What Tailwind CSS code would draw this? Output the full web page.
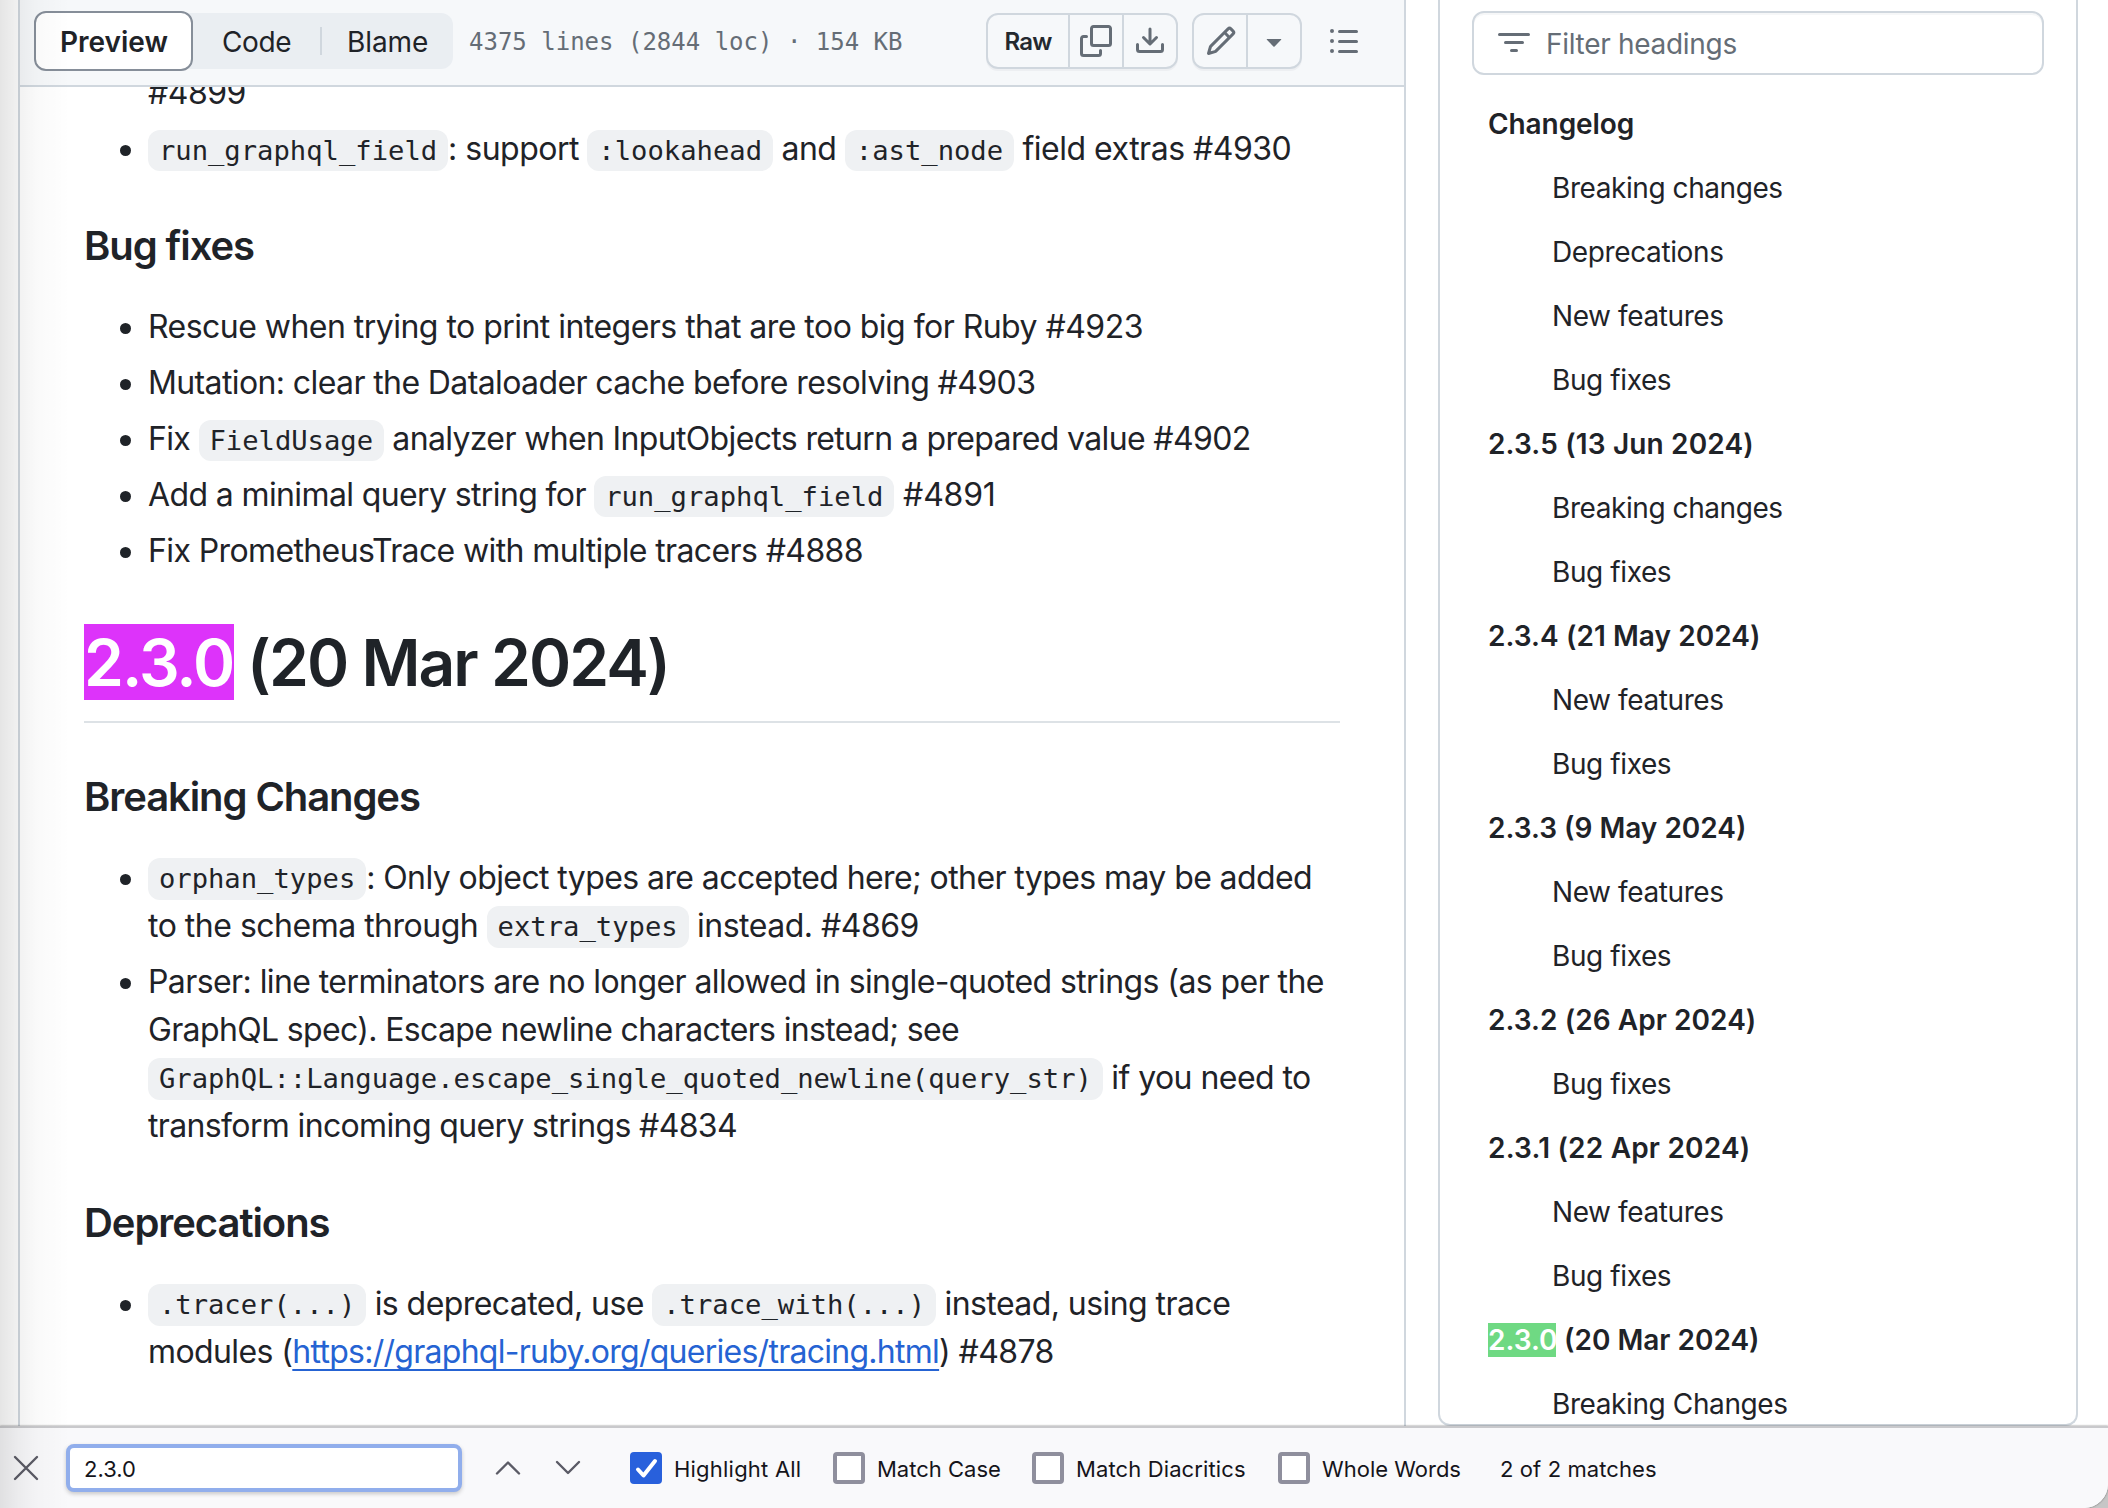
<!DOCTYPE html>
<html lang="en">
<head>
<meta charset="utf-8">
<title>Changelog</title>
<script src="https://cdn.jsdelivr.net/npm/@tailwindcss/browser@4"></script>
</head>
<body class="relative flex h-[1508px] w-[2108px] flex-col overflow-hidden bg-[#c6c6c6] font-[Inter,sans-serif] text-[#1f2328]">
  <div class="flex h-[1426px] bg-white pl-[18px]">
    <!-- File view -->
    <main class="flex w-[1388px] shrink-0 flex-col border-x-2 border-[#d0d7de]">
      <div class="flex h-[87px] shrink-0 items-start border-b-2 border-[#d0d7de] bg-[#f6f8fa] pl-3.5 pt-[11px]">
        <div class="flex h-[60px] w-[419px] items-center">
          <div class="z-10 flex h-[60px] w-[159px] items-center justify-center rounded-xl border-2 border-[#868e99] bg-white pt-0.5 pl-px text-[28px] leading-none font-semibold">Preview</div>
          <div class="-ml-3 flex h-14 w-[272px] items-center rounded-r-xl bg-[#eaeef2] text-[28px] leading-none">
            <span class="w-[139px] pt-0.5 pl-[41px] tracking-[-0.4px]">Code</span>
            <span class="h-7 w-0.5 bg-[#d0d7de]"></span>
            <span class="pt-0.5 pl-[25px] tracking-[-0.1px]">Blame</span>
          </div>
        </div>
        <div class="ml-4 flex h-[60px] w-[517px] items-center pt-0.5 font-['DejaVu_Sans_Mono',monospace] text-[24px] leading-none whitespace-pre text-[#656d76]">4375 lines (2844 loc) · 154 KB</div>
        <div class="mt-0.5 flex h-14 w-[192px] rounded-xl border-2 border-[#d0d7de] bg-[#f6f8fa] text-[#656d76] shadow-[0_2px_0_rgba(31,35,40,0.04)]">
          <span class="flex w-[82px] items-center justify-center border-r-2 border-[#d0d7de] pt-px text-[24px] leading-none font-semibold tracking-[-0.9px] text-[#24292f]">Raw</span>
          <span class="flex w-[54px] items-center justify-center border-r-2 border-[#d0d7de]">
            <svg class="size-8 shrink-0" viewBox="0 0 16 16" fill="currentColor"><path d="M0 6.75C0 5.784.784 5 1.75 5h1.5a.75.75 0 0 1 0 1.5h-1.5a.25.25 0 0 0-.25.25v7.5c0 .138.112.25.25.25h7.5a.25.25 0 0 0 .25-.25v-1.5a.75.75 0 0 1 1.5 0v1.5A1.75 1.75 0 0 1 9.25 16h-7.5A1.75 1.75 0 0 1 0 14.25Z"/><path d="M5 1.75C5 .784 5.784 0 6.75 0h7.5C15.216 0 16 .784 16 1.75v7.5A1.75 1.75 0 0 1 14.25 11h-7.5A1.75 1.75 0 0 1 5 9.25Zm1.75-.25a.25.25 0 0 0-.25.25v7.5c0 .138.112.25.25.25h7.5a.25.25 0 0 0 .25-.25v-7.5a.25.25 0 0 0-.25-.25Z"/></svg>
          </span>
          <span class="flex flex-1 items-center justify-center">
            <svg class="size-8 shrink-0" viewBox="0 0 16 16" fill="currentColor"><path d="M2.75 14A1.75 1.75 0 0 1 1 12.25v-2.5a.75.75 0 0 1 1.5 0v2.5c0 .138.112.25.25.25h10.5a.25.25 0 0 0 .25-.25v-2.5a.75.75 0 0 1 1.5 0v2.5A1.75 1.75 0 0 1 13.25 14Z"/><path d="M7.25 7.689V2a.75.75 0 0 1 1.5 0v5.689l1.97-1.969a.749.749 0 1 1 1.06 1.06l-3.25 3.25a.749.749 0 0 1-1.06 0L4.22 6.78a.749.749 0 1 1 1.06-1.06l1.97 1.969Z"/></svg>
          </span>
        </div>
        <div class="mt-0.5 ml-3.5 flex h-14 w-[110px] rounded-xl border-2 border-[#d0d7de] bg-[#f6f8fa] text-[#656d76] shadow-[0_2px_0_rgba(31,35,40,0.04)]">
          <span class="flex w-[54px] items-center justify-center border-r-2 border-[#d0d7de] pl-px">
            <svg class="size-8 shrink-0" viewBox="0 0 16 16" fill="currentColor"><path d="M11.013 1.427a1.75 1.75 0 0 1 2.474 0l1.086 1.086a1.75 1.75 0 0 1 0 2.474l-8.61 8.61c-.21.21-.47.364-.756.445l-3.251.93a.75.75 0 0 1-.927-.928l.929-3.25c.081-.286.235-.547.445-.758l8.61-8.61Zm.176 4.823L9.75 4.81l-6.286 6.287a.253.253 0 0 0-.064.108l-.558 1.953 1.953-.558a.253.253 0 0 0 .108-.064Zm1.238-3.763a.25.25 0 0 0-.354 0L10.811 3.75l1.439 1.44 1.263-1.263a.25.25 0 0 0 0-.354Z"/></svg>
          </span>
          <span class="flex flex-1 items-center justify-center">
            <svg class="size-8 shrink-0" viewBox="0 0 16 16" fill="currentColor"><path d="m4.427 7.427 3.396 3.396a.25.25 0 0 0 .354 0l3.396-3.396A.25.25 0 0 0 11.396 7H4.604a.25.25 0 0 0-.177.427Z"/></svg>
          </span>
        </div>
        <div class="ml-[26px] flex h-[60px] items-center text-[#656d76]">
          <svg class="size-8 shrink-0" viewBox="0 0 16 16" fill="currentColor"><path d="M5.75 2.5h8.5a.75.75 0 0 1 0 1.5h-8.5a.75.75 0 0 1 0-1.5Zm0 5h8.5a.75.75 0 0 1 0 1.5h-8.5a.75.75 0 0 1 0-1.5Zm0 5h8.5a.75.75 0 0 1 0 1.5h-8.5a.75.75 0 0 1 0-1.5ZM2 14a1 1 0 1 1 0-2 1 1 0 0 1 0 2Zm1-6a1 1 0 1 1-2 0 1 1 0 0 1 2 0ZM2 4a1 1 0 1 1 0-2 1 1 0 0 1 0 2Z"/></svg>
        </div>
      </div>

      <article class="flex-1 overflow-hidden px-16 text-[32px] leading-[48px] whitespace-nowrap">
        <div class="-mt-[18px]">
          <ul class="flex flex-col gap-2 pl-16">
            <li class="tracking-[-0.5px]">#4899</li>
            <li class="flex items-baseline tracking-[-0.5px] before:-ml-[28px] before:mr-[17px] before:size-[11px] before:-translate-y-1 before:rounded-full before:bg-[#1f2328]"><span><code class="rounded-xl bg-[#eff1f3] px-[10.9px] py-[5.4px] font-['DejaVu_Sans_Mono',monospace] text-[27.2px] leading-none tracking-normal">run_graphql_field</code>: support <code class="rounded-xl bg-[#eff1f3] px-[10.9px] py-[5.4px] font-['DejaVu_Sans_Mono',monospace] text-[27.2px] leading-none tracking-normal">:lookahead</code> and <code class="rounded-xl bg-[#eff1f3] px-[10.9px] py-[5.4px] font-['DejaVu_Sans_Mono',monospace] text-[27.2px] leading-none tracking-normal">:ast_node</code> field extras #4930</span></li>
          </ul>
          <h3 class="mt-12 text-[40px] leading-[50px] font-semibold tracking-[-1.09px]">Bug fixes</h3>
          <ul class="mt-8 flex flex-col gap-2 pl-16">
            <li class="flex items-baseline tracking-[-0.53px] before:-ml-[28px] before:mr-[17px] before:size-[11px] before:-translate-y-1 before:rounded-full before:bg-[#1f2328]">Rescue when trying to print integers that are too big for Ruby #4923</li>
            <li class="flex items-baseline tracking-[-0.61px] before:-ml-[28px] before:mr-[17px] before:size-[11px] before:-translate-y-1 before:rounded-full before:bg-[#1f2328]">Mutation: clear the Dataloader cache before resolving #4903</li>
            <li class="flex items-baseline tracking-[-0.65px] before:-ml-[28px] before:mr-[17px] before:size-[11px] before:-translate-y-1 before:rounded-full before:bg-[#1f2328]"><span>Fix <code class="rounded-xl bg-[#eff1f3] px-[10.9px] py-[5.4px] font-['DejaVu_Sans_Mono',monospace] text-[27.2px] leading-none tracking-normal">FieldUsage</code> analyzer when InputObjects return a prepared value #4902</span></li>
            <li class="flex items-baseline tracking-[-0.62px] before:-ml-[28px] before:mr-[17px] before:size-[11px] before:-translate-y-1 before:rounded-full before:bg-[#1f2328]"><span>Add a minimal query string for <code class="rounded-xl bg-[#eff1f3] px-[10.9px] py-[5.4px] font-['DejaVu_Sans_Mono',monospace] text-[27.2px] leading-none tracking-normal">run_graphql_field</code><span class="tracking-[-0.2px]"> #4891</span></span></li>
            <li class="flex items-baseline tracking-[-0.61px] before:-ml-[28px] before:mr-[17px] before:size-[11px] before:-translate-y-1 before:rounded-full before:bg-[#1f2328]">Fix PrometheusTrace with multiple tracers #4888</li>
          </ul>
          <h1 class="mt-12 flex items-center border-b-2 border-[#dde2e6] pb-[18px] text-[64px] leading-[80px] font-semibold"><span class="-mt-0.5 mr-[13px] flex h-[76px] w-[150px] items-center bg-[#dd33fa] pt-0.5 tracking-[-1.9px] text-white">2.3.0</span><span class="tracking-[-1.92px]">(20 Mar 2024)</span></h1>
          <h3 class="mt-[48.6px] text-[40px] leading-[50px] font-semibold tracking-[-1.09px]">Breaking Changes</h3>
          <ul class="mt-8 flex flex-col gap-2 pl-16">
            <li class="flex items-baseline before:-ml-[28px] before:mr-[17px] before:size-[11px] before:-translate-y-1 before:rounded-full before:bg-[#1f2328]"><p><span class="tracking-[-0.59px]"><code class="rounded-xl bg-[#eff1f3] px-[10.9px] py-[5.4px] font-['DejaVu_Sans_Mono',monospace] text-[27.2px] leading-none tracking-normal">orphan_types</code>: Only object types are accepted here; other types may be added</span><br><span class="tracking-[-0.5px]">to the schema through <code class="rounded-xl bg-[#eff1f3] px-[10.9px] py-[5.4px] font-['DejaVu_Sans_Mono',monospace] text-[27.2px] leading-none tracking-normal">extra_types</code> instead. #4869</span></p></li>
            <li class="flex items-baseline before:-ml-[28px] before:mr-[17px] before:size-[11px] before:-translate-y-1 before:rounded-full before:bg-[#1f2328]"><p><span class="tracking-[-0.58px]">Parser: line terminators are no longer allowed in single-quoted strings (as per the</span><br><span class="tracking-[-0.65px]">GraphQL spec). Escape newline characters instead; see</span><br><span class="tracking-[-0.55px]"><code class="rounded-xl bg-[#eff1f3] px-[10.9px] py-[5.4px] font-['DejaVu_Sans_Mono',monospace] text-[27.2px] leading-none tracking-normal">GraphQL::Language.escape_single_quoted_newline(query_str)</code> if you need to</span><br><span class="tracking-[-0.64px]">transform incoming query strings #4834</span></p></li>
          </ul>
          <h3 class="mt-12 text-[40px] leading-[50px] font-semibold tracking-[-1.06px]">Deprecations</h3>
          <ul class="mt-8 flex flex-col gap-2 pl-16">
            <li class="flex items-baseline before:-ml-[28px] before:mr-[17px] before:size-[11px] before:-translate-y-1 before:rounded-full before:bg-[#1f2328]"><p><span class="tracking-[-0.56px]"><code class="rounded-xl bg-[#eff1f3] px-[10.9px] py-[5.4px] font-['DejaVu_Sans_Mono',monospace] text-[27.2px] leading-none tracking-normal">.tracer(...)</code> is deprecated, use <code class="rounded-xl bg-[#eff1f3] px-[10.9px] py-[5.4px] font-['DejaVu_Sans_Mono',monospace] text-[27.2px] leading-none tracking-normal">.trace_with(...)</code> instead, using trace</span><br><span class="tracking-[-0.6px]">modules (<a class="tracking-[-0.73px] text-[#2563d3] underline decoration-2 underline-offset-[6px] [text-decoration-skip-ink:none]">https://graphql-ruby.org/queries/tracing.html</a>) #4878</span></p></li>
          </ul>
        </div>
      </article>
    </main>

    <!-- Outline panel -->
    <aside class="ml-8 flex h-[1426px] w-[640px] shrink-0 flex-col overflow-hidden rounded-b-xl border-x-2 border-b-2 border-[#d0d7de] px-8 pt-[11px]">
      <div class="flex h-16 w-[572px] shrink-0 items-center rounded-xl border-2 border-[#d0d7de] pl-6 text-[28px] leading-none tracking-[-0.3px] text-[#656d76] shadow-[inset_0_2px_0_rgba(208,215,222,0.2)]">
        <svg class="mr-4 size-8 shrink-0" viewBox="0 0 16 16" fill="currentColor"><path d="M.75 3h14.5a.75.75 0 0 1 0 1.5H.75a.75.75 0 0 1 0-1.5ZM3 7.75A.75.75 0 0 1 3.75 7h8.5a.75.75 0 0 1 0 1.5h-8.5A.75.75 0 0 1 3 7.75Zm3 4a.75.75 0 0 1 .75-.75h2.5a.75.75 0 0 1 0 1.5h-2.5a.75.75 0 0 1-.75-.75Z"/></svg><span class="pt-0.5">Filter headings</span>
      </div>
      <ul class="mt-[17px] flex flex-col pl-4 text-[28px] leading-[34px]">
        <li class="flex h-16 shrink-0 items-center font-semibold tracking-[-0.08px]">Changelog</li>
        <li class="flex h-16 shrink-0 items-center pl-16 tracking-[-0.43px]">Breaking changes</li>
        <li class="flex h-16 shrink-0 items-center pl-16 tracking-[-0.38px]">Deprecations</li>
        <li class="flex h-16 shrink-0 items-center pl-16 tracking-[-0.4px]">New features</li>
        <li class="flex h-16 shrink-0 items-center pl-16 tracking-[-0.4px]">Bug fixes</li>
        <li class="flex h-16 shrink-0 items-center font-semibold tracking-[0.15px]">2.3.5 (13 Jun 2024)</li>
        <li class="flex h-16 shrink-0 items-center pl-16 tracking-[-0.43px]">Breaking changes</li>
        <li class="flex h-16 shrink-0 items-center pl-16 tracking-[-0.4px]">Bug fixes</li>
        <li class="flex h-16 shrink-0 items-center font-semibold tracking-[0.06px]">2.3.4 (21 May 2024)</li>
        <li class="flex h-16 shrink-0 items-center pl-16 tracking-[-0.4px]">New features</li>
        <li class="flex h-16 shrink-0 items-center pl-16 tracking-[-0.4px]">Bug fixes</li>
        <li class="flex h-16 shrink-0 items-center font-semibold">2.3.3 (9 May 2024)</li>
        <li class="flex h-16 shrink-0 items-center pl-16 tracking-[-0.4px]">New features</li>
        <li class="flex h-16 shrink-0 items-center pl-16 tracking-[-0.4px]">Bug fixes</li>
        <li class="flex h-16 shrink-0 items-center font-semibold tracking-[0.06px]">2.3.2 (26 Apr 2024)</li>
        <li class="flex h-16 shrink-0 items-center pl-16 tracking-[-0.4px]">Bug fixes</li>
        <li class="flex h-16 shrink-0 items-center font-semibold tracking-[0.2px]">2.3.1 (22 Apr 2024)</li>
        <li class="flex h-16 shrink-0 items-center pl-16 tracking-[-0.4px]">New features</li>
        <li class="flex h-16 shrink-0 items-center pl-16 tracking-[-0.4px]">Bug fixes</li>
        <li class="flex h-16 shrink-0 items-center font-semibold"><span class="mr-2 w-[68px] bg-[#6fd983] text-white">2.3.0</span>(20 Mar 2024)</li>
        <li class="flex h-16 shrink-0 items-center pl-16 tracking-[-0.4px]">Breaking Changes</li>
      </ul>
    </aside>
  </div>

  <!-- Find bar -->
  <div class="flex flex-col bg-white [border-bottom-right-radius:24px] shadow-[0_0_2px_rgba(0,0,0,0.6)]">
    <div class="flex h-[82px] items-center border-t-2 border-[#c9c9cc] bg-[#f9f9fb] pl-3 text-[22px] leading-none whitespace-nowrap text-[#15141a] [border-bottom-right-radius:24px]">
      <svg class="size-7 shrink-0" viewBox="0 0 28 28" fill="none" stroke="#5b5b66" stroke-width="2.4" stroke-linecap="round"><path d="M3 3 25 25M25 3 3 25"/></svg>
      <div class="ml-[26px] flex h-12 w-[396px] items-center rounded-lg border-4 border-[#91aeec] bg-white pt-0.5 pl-[14px] shadow-[0_2px_4px_rgba(0,0,0,0.2)]">2.3.0</div>
      <svg class="ml-[32px] size-7 shrink-0" viewBox="0 0 28 28" fill="none" stroke="#5b5b66" stroke-width="2.4" stroke-linecap="round" stroke-linejoin="round"><path d="M3 19.500 14 8.500 25 19.500"/></svg>
      <svg class="ml-[32px] size-7 shrink-0" viewBox="0 0 28 28" fill="none" stroke="#5b5b66" stroke-width="2.4" stroke-linecap="round" stroke-linejoin="round"><path d="M3 8 14 19 25 8"/></svg>
      <div class="ml-12 flex w-[203px] items-center">
        <span class="mr-3 flex size-8 items-center justify-center rounded bg-[#2860dc]"><svg class="size-8" viewBox="0 0 32 32" fill="none" stroke="white" stroke-width="4" stroke-linecap="round" stroke-linejoin="round"><path d="M8 17.500 13.500 23.500 25 9"/></svg></span>
        <span class="pt-0.5 tracking-[0.22px]">Highlight All</span>
      </div>
      <div class="flex w-[199px] items-center"><span class="mr-3 size-8 rounded border-4 border-[#8f8f9d] bg-white"></span><span class="pt-0.5">Match Case</span></div>
      <div class="flex w-[246px] items-center"><span class="mr-3 size-8 rounded border-4 border-[#8f8f9d] bg-white"></span><span class="pt-0.5 tracking-[0.12px]">Match Diacritics</span></div>
      <div class="flex w-[222px] items-center"><span class="mr-3 size-8 rounded border-4 border-[#8f8f9d] bg-white"></span><span class="pt-0.5">Whole Words</span></div>
      <div class="pt-0.5 tracking-[0.1px]">2 of 2 matches</div>
    </div>
  </div>

  <!-- Shade cast by the neighbouring window -->
  <div class="pointer-events-none absolute inset-y-0 left-0 z-20 w-[70px] bg-[linear-gradient(to_right,rgba(0,0,0,0.1)_0,rgba(0,0,0,0.055)_18px,rgba(0,0,0,0.022)_36px,rgba(0,0,0,0)_70px)]"></div>
</body>
</html>
